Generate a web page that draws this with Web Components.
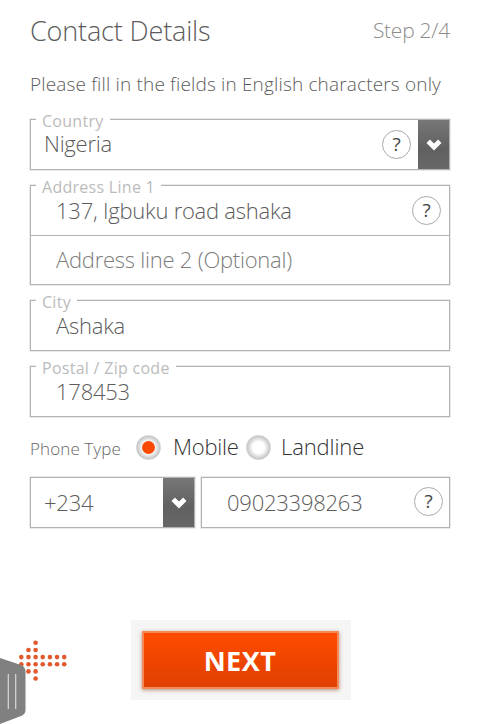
<!DOCTYPE html>
<html lang="en">
<head>
<meta charset="utf-8">
<title>Contact Details</title>
<style>
  body {
    margin: 0;
    background: #fff;
    font-family: "Open Sans", sans-serif;
    font-weight: 300;
    color: #5c5c5c;
  }
</style>
</head>
<body>
<contact-page></contact-page>

<script>
"use strict";

(() => {
  customElements.define("help-badge", class extends HTMLElement {
    constructor() {
      super();
      this.attachShadow({mode: "open"}).innerHTML = `
        <style>
          :host {
            display: flex;
            align-items: center;
            justify-content: center;
            flex: none;
            box-sizing: border-box;
            width: 29px;
            height: 29px;
            border: 1px solid #aaa;
            border-radius: 50%;
            font-size: 19px;
            font-weight: 400;
            line-height: 27px;
            letter-spacing: 0;
            color: #444;
          }
        </style>
        <span>?</span>
      `;
    }
  });

  customElements.define("drop-arrow", class extends HTMLElement {
    constructor() {
      super();
      this.attachShadow({mode: "open"}).innerHTML = `
        <style>
          :host {
            display: flex;
            align-items: center;
            justify-content: center;
            flex: none;
            width: 31px;
            background: linear-gradient(#777 0%, #606060 60%, #686868 100%);
          }
          svg { margin-left: 1px; }
        </style>
        <svg width="18" height="14" viewBox="0 0 18 14">
          <path d="M3.2 3.2 L9 9 L14.8 3.2" fill="none" stroke="#fff" stroke-width="4.8"/>
        </svg>
      `;
    }
  });

  customElements.define("form-box", class extends HTMLElement {
    connectedCallback() {
      const label = this.getAttribute("label");
      this.attachShadow({mode: "open"}).innerHTML = `
        <style>
          :host {
            display: grid;
            position: relative;
            box-sizing: border-box;
            border: 1px solid #b2b2b2;
            box-shadow: 0 0 0 0.5px #d4d4d4;
          }
          .label {
            position: absolute;
            left: 5px;
            top: -9px;
            padding: 0 6px;
            background: #fff;
            font-size: 16px;
            font-weight: 400;
            line-height: 20px;
            letter-spacing: 0.28px;
            white-space: nowrap;
            color: #bbb;
          }
        </style>
        ${label ? `<span class="label">${label}</span>` : ""}
        <slot></slot>
      `;
    }
  });

  customElements.define("field-row", class extends HTMLElement {
    constructor() {
      super();
      this.attachShadow({mode: "open"}).innerHTML = `
        <style>
          :host {
            display: flex;
            align-items: stretch;
            box-sizing: border-box;
            height: 49px;
          }
          .value {
            flex: 1;
            margin-top: var(--drop, 12px);
            padding-left: var(--indent, 25px);
            font-size: 22px;
            line-height: 24px;
            letter-spacing: -0.24px;
            white-space: nowrap;
          }
          ::slotted(help-badge) {
            align-self: center;
            margin-right: var(--badge-gap, 8px);
          }
        </style>
        <span class="value"><slot></slot></span>
        <slot name="tool"></slot>
      `;
    }
  });

  customElements.define("radio-dot", class extends HTMLElement {
    constructor() {
      super();
      this.attachShadow({mode: "open"}).innerHTML = `
        <style>
          :host {
            display: flex;
            align-items: center;
            justify-content: center;
            box-sizing: border-box;
            flex: none;
            width: 25px;
            height: 25px;
            border: 1px solid #d0d0d0;
            border-radius: 50%;
            background: radial-gradient(circle closest-side, #fff 50%, #c6c6c6 100%);
          }
          :host([checked])::before {
            content: "";
            width: 13px;
            height: 13px;
            border-radius: 50%;
            background: #fb4a00;
          }
        </style>
      `;
    }
  });

  customElements.define("next-button", class extends HTMLElement {
    constructor() {
      super();
      this.attachShadow({mode: "open"}).innerHTML = `
        <style>
          :host {
            display: block;
            box-sizing: border-box;
            width: 220px;
            height: 80px;
            padding: 11px;
            background: #f5f5f5;
          }
          .face {
            box-sizing: border-box;
            width: 197px;
            height: 58px;
            border: 2px solid #f58a58;
            background: linear-gradient(#ff4b00, #df4000);
            box-shadow: 0 1px 4px #b58c78;
            text-align: center;
            font-size: 27px;
            font-weight: 700;
            line-height: 55px;
            letter-spacing: 0.5px;
            text-indent: -1px;
            color: #fff;
          }
        </style>
        <div class="face"><slot></slot></div>
      `;
    }
  });

  customElements.define("back-arrow", class extends HTMLElement {
    constructor() {
      super();
      // rows of dots that form an arrow pointing left
      const columns = [[2, 3], [1, 2, 3, 4], [0, 1, 2, 3, 4, 5], [2, 3], [2, 3], [2, 3], [2, 3]];
      const dots = columns.map((rows, x) => rows.map(y =>
        `<circle cx="${3.3 + x * 7.15}" cy="${2.8 + y * 7.15}" r="2.3"/>`).join("")).join("");

      this.attachShadow({mode: "open"}).innerHTML = `
        <style>
          :host { display: block; width: 50px; height: 42px; }
          svg { display: block; }
        </style>
        <svg width="50" height="42" fill="#e0582c">${dots}</svg>
      `;
    }
  });

  customElements.define("drawer-handle", class extends HTMLElement {
    constructor() {
      super();
      this.attachShadow({mode: "open"}).innerHTML = `
        <style>
          :host { display: block; width: 27px; height: 68px; }
          svg { display: block; }
        </style>
        <svg width="27" height="68">
          <path d="M0 2 L21 9 Q25.5 11 25.5 16 V54 Q25.5 58 21 60 L0 68 Z" fill="#808080"/>
          <path d="M8.3 18 V53 M15.7 18 V53" stroke="#d8d8d8" stroke-width="1.2"/>
        </svg>
      `;
    }
  });

  customElements.define("contact-page", class extends HTMLElement {
    constructor() {
      super();
      this.attachShadow({mode: "open"}).innerHTML = `
        <style>
          :host {
            display: block;
            position: relative;
            box-sizing: border-box;
            height: 724px;
            padding: 10px 30px 0;
            overflow: hidden;
          }
          header {
            display: flex;
            justify-content: space-between;
            height: 42px;
            line-height: 42px;
          }
          h1 { margin: 0; font-size: 27px; font-weight: 300; letter-spacing: -0.15px; }
          .step { font-size: 21px; letter-spacing: -0.25px; line-height: 41px; color: #8c8c8c; }
          .intro {
            margin: 17px 0 20px;
            font-size: 19px;
            line-height: 30px;
            letter-spacing: 0.16px;
            white-space: nowrap;
          }
          .fields { display: grid; gap: 15px; }
          .country { --indent: 13px; --drop: 11px; --badge-gap: 7px; }
          .second { border-top: 1px solid #b2b2b2; color: #7c7c7c; --drop: 11px; }
          .types {
            display: flex;
            align-items: center;
            height: 60px;
            font-size: 22px;
            letter-spacing: -0.1px;
            white-space: nowrap;
            color: #333;
          }
          .types span { margin-top: -2px; }
          .types .title { width: 106px; margin-top: 2px; font-size: 17px; letter-spacing: 0.1px; color: #666; }
          .types .mobile { width: 73px; margin-left: 12px; letter-spacing: -0.25px; }
          .types .landline { margin-left: 10px; }
          .phone {
            display: grid;
            grid-template-columns: 165px 249px;
            gap: 6px;
            --badge-gap: 6px;
          }
          .phone help-badge { margin-top: -2px; }
          .code { --indent: 13px; }
          footer {
            display: flex;
            align-items: flex-start;
            margin: 92px 0 0 -13px;
          }
          back-arrow { margin: 20px 63px 0 1px; }
          drawer-handle { position: absolute; left: 0; bottom: 0; }
        </style>
        <header><h1>Contact Details</h1><span class="step">Step 2/4</span></header>
        <p class="intro">Please fill in the fields in English characters only</p>
        <div class="fields">
          <form-box label="Country">
            <field-row class="country">Nigeria<help-badge slot="tool"></help-badge><drop-arrow slot="tool"></drop-arrow></field-row>
          </form-box>
          <form-box label="Address Line 1">
            <field-row>137, Igbuku road ashaka<help-badge slot="tool"></help-badge></field-row>
            <field-row class="second">Address line 2 (Optional)</field-row>
          </form-box>
          <form-box label="City"><field-row>Ashaka</field-row></form-box>
          <form-box label="Postal / Zip code"><field-row>178453</field-row></form-box>
        </div>
        <div class="types">
          <span class="title">Phone Type</span>
          <radio-dot checked></radio-dot><span class="mobile">Mobile</span>
          <radio-dot></radio-dot><span class="landline">Landline</span>
        </div>
        <div class="phone">
          <form-box><field-row class="code">+234<drop-arrow slot="tool"></drop-arrow></field-row></form-box>
          <form-box><field-row>09023398263<help-badge slot="tool"></help-badge></field-row></form-box>
        </div>
        <footer>
          <back-arrow></back-arrow>
          <next-button>NEXT</next-button>
        </footer>
        <drawer-handle></drawer-handle>
      `;
    }
  });
})();
</script>
</body>
</html>
